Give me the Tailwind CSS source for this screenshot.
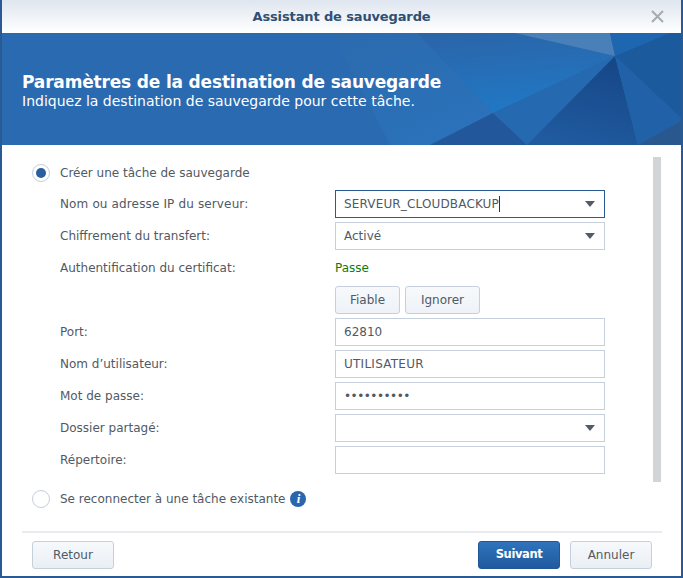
<!DOCTYPE html>
<html lang="fr">

<head>
    <meta charset="UTF-8">
    <meta name="viewport" content="width=device-width, initial-scale=1.0">
    <title>Assistant de sauvegarde</title>
    <script src="https://cdn.jsdelivr.net/npm/@tailwindcss/browser@4"></script>
</head>

<body class="bg-white overflow-hidden">
    <div class="w-[683px] h-[578px] flex flex-col bg-white border-x-2 border-b-2 border-[#2a5a94] font-['DejaVu_Sans',sans-serif] text-[12px] text-[#505a64]">
        <!-- title bar -->
        <div class="relative h-[33px] shrink-0 flex items-center justify-center bg-gradient-to-b from-[#dfe6ef] to-white text-[13px] font-bold tracking-[-0.13px] text-[#2f4f74]">
            Assistant de sauvegarde
            <svg class="absolute right-[17px] top-[10px]" width="13" height="13" viewBox="0 0 13 13"><path d="M1 1L12 12M12 1L1 12" stroke="#a6abb1" stroke-width="2" fill="none" /></svg>
        </div>

        <!-- banner -->
        <div class="relative h-[112px] shrink-0 bg-[#2a6ab0] text-white overflow-hidden">
            <svg class="absolute left-[-2px] top-0" width="683" height="112" viewBox="0 0 683 112">
                <defs>
                    <linearGradient id="fanA" x1="0" y1="0" x2="0.6" y2="1">
                        <stop offset="0" stop-color="#2c6aae" />
                        <stop offset="1" stop-color="#2a72ba" />
                    </linearGradient>
                    <linearGradient id="fanB" x1="0.2" y1="0" x2="0.4" y2="1">
                        <stop offset="0" stop-color="#2b65a9" />
                        <stop offset="1" stop-color="#2078c5" />
                    </linearGradient>
                    <linearGradient id="dark" x1="0.7" y1="0" x2="0.4" y2="1">
                        <stop offset="0" stop-color="#164787" />
                        <stop offset="1" stop-color="#205a9f" />
                    </linearGradient>
                </defs>
                <polygon points="333,0 417,0 493,80 430,112 390,112" fill="url(#fanA)" />
                <polygon points="417,0 515,0 615,23 493,80" fill="url(#fanB)" />
                <polygon points="515,0 610,0 615,23" fill="#4a80b8" />
                <polygon points="610,0 670,0 615,23" fill="#1f66b0" />
                <polygon points="670,0 681,0 683,87 615,23" fill="#1c5a9e" />
                <polygon points="493,80 430,112 527,112" fill="#22589b" />
                <polygon points="493,80 615,23 527,112" fill="#2569b0" />
                <polygon points="615,23 527,112 638,112" fill="url(#dark)" />
                <polygon points="615,23 638,112 683,87" fill="#2161a8" />
                <polygon points="638,112 683,87 683,112" fill="#28588e" />
            </svg>
            <div class="relative pl-5 pt-[38px]">
                <div class="text-[17px] leading-[22px] font-bold tracking-[-0.17px]">Paramètres de la destination de sauvegarde</div>
                <div class="text-[14px] leading-[16px]">Indiquez la destination de sauvegarde pour cette tâche.</div>
            </div>
        </div>

        <!-- form -->
        <div class="relative flex-1 pl-[30px] pt-[12px]">
            <div class="absolute left-[651px] top-[12px] w-2 h-[325px] bg-[#d3d4d6]"></div>

            <div class="flex items-center h-[32px] gap-[10px]">
                <span class="w-[18px] h-[18px] rounded-full border border-[#c5cedb] flex items-center justify-center">
                    <span class="w-[10px] h-[10px] rounded-full bg-[#2a5f9f]"></span>
                </span>
                <span>Créer une tâche de sauvegarde</span>
            </div>

            <div class="pl-7 -mt-[1px]">
                <div class="flex items-center h-[32px]">
                    <span class="w-[275px] tracking-[0.14px]">Nom ou adresse IP du serveur:</span>
                    <div class="w-[270px] h-[28px] border border-[#2a5a94] flex items-center justify-between pl-2 pr-[9px]">
                        <span class="border-r border-[#333] leading-[16px] tracking-[0.15px]">SERVEUR_CLOUDBACKUP</span>
                        <span class="border-x-[5px] border-x-transparent border-t-[6px] border-t-[#555c66]"></span>
                    </div>
                </div>
                <div class="flex items-center h-[32px]">
                    <span class="w-[275px]">Chiffrement du transfert:</span>
                    <div class="w-[270px] h-[28px] border border-[#c6d0dd] flex items-center justify-between pl-2 pr-[9px]">
                        <span>Activé</span>
                        <span class="border-x-[5px] border-x-transparent border-t-[6px] border-t-[#555c66]"></span>
                    </div>
                </div>
                <div class="flex items-center h-[32px]">
                    <span class="w-[275px]">Authentification du certificat:</span>
                    <span class="text-[#0f7a0f]">Passe</span>
                </div>
                <div class="flex items-center h-[32px] gap-[5px] pl-[275px]">
                    <button class="w-[65px] h-[28px] rounded-[3px] border border-[#c6d0dd] bg-gradient-to-b from-[#f7f9fb] to-[#eef2f7]">Fiable</button>
                    <button class="w-[75px] h-[28px] rounded-[3px] border border-[#c6d0dd] bg-gradient-to-b from-[#f7f9fb] to-[#eef2f7]">Ignorer</button>
                </div>
                <div class="flex items-center h-[32px]">
                    <span class="w-[275px]">Port:</span>
                    <div class="w-[270px] h-[28px] border border-[#c6d0dd] flex items-center pl-2">62810</div>
                </div>
                <div class="flex items-center h-[32px]">
                    <span class="w-[275px]">Nom d’utilisateur:</span>
                    <div class="w-[270px] h-[28px] border border-[#c6d0dd] flex items-center pl-2 tracking-[0.25px]">UTILISATEUR</div>
                </div>
                <div class="flex items-center h-[32px]">
                    <span class="w-[275px]">Mot de passe:</span>
                    <div class="w-[270px] h-[28px] border border-[#c6d0dd] flex items-center pl-2 tracking-[-0.5px]">••••••••••</div>
                </div>
                <div class="flex items-center h-[32px]">
                    <span class="w-[275px]">Dossier partagé:</span>
                    <div class="w-[270px] h-[28px] border border-[#c6d0dd] flex items-center justify-end pr-[9px]">
                        <span class="border-x-[5px] border-x-transparent border-t-[6px] border-t-[#555c66]"></span>
                    </div>
                </div>
                <div class="flex items-center h-[32px]">
                    <span class="w-[275px]">Répertoire:</span>
                    <div class="w-[270px] h-[28px] border border-[#c6d0dd]"></div>
                </div>
            </div>

            <div class="flex items-center h-[32px] gap-[10px] mt-[7px]">
                <span class="w-[18px] h-[18px] rounded-full border border-[#c5cedb]"></span>
                <span>Se reconnecter à une tâche existante</span>
                <span class="w-4 h-4 -ml-[5px] rounded-full bg-[#2a66ad] text-white flex items-center justify-center font-['Liberation_Serif',serif] italic font-bold text-[13px]">i</span>
            </div>
        </div>

        <!-- footer -->
        <div class="ml-5 mr-[19px] h-[45px] shrink-0 border-t-2 border-[#e9ebee] flex items-center pl-[10px] pr-[10px]">
            <button class="w-[82px] h-[28px] rounded-[3px] border border-[#c6d0dd] bg-gradient-to-b from-[#f7f9fb] to-[#eaeff5]">Retour</button>
            <button class="ml-auto w-[82px] h-[28px] pt-px rounded-[3px] border border-[#1f5798] bg-gradient-to-b from-[#2f74bd] to-[#20599e] text-white font-bold text-[11.5px] tracking-[-0.4px]">Suivant</button>
            <button class="ml-[10px] w-[82px] h-[28px] rounded-[3px] border border-[#c6d0dd] bg-gradient-to-b from-[#f7f9fb] to-[#eaeff5]">Annuler</button>
        </div>
    </div>
</body>

</html>
